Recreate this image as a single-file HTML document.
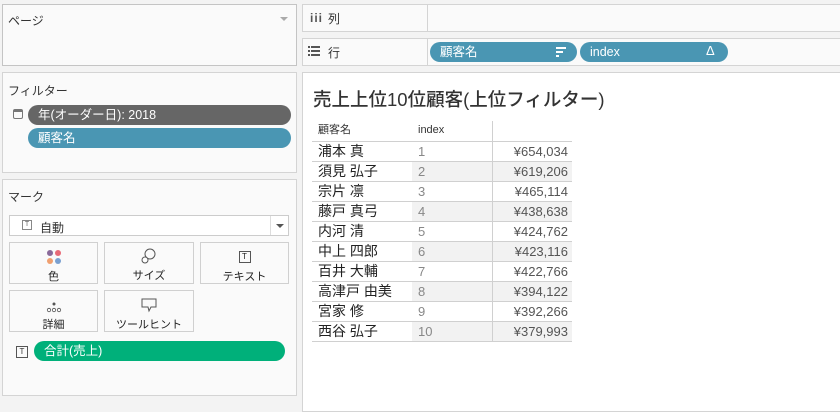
<!DOCTYPE html>
<html><head><meta charset="utf-8"><style>
*{box-sizing:border-box;margin:0;padding:0}
body{width:840px;height:404px;background:#f3f3f3;font-family:"Liberation Sans","Noto Sans CJK JP",sans-serif;font-size:12px;color:#333;position:relative;overflow:hidden}
.a{position:absolute}
.box{position:absolute;background:#fafafa;border:1px solid #d4d4d4}
.pill{position:absolute;height:20px;border-radius:10px;color:#fff;font-size:12.5px;line-height:20px;padding-left:10px}
.btn{position:absolute;border:1px solid #d0d0d0;background:#fafafa;text-align:center;font-size:11px;color:#222}
.tbl{position:absolute;left:312px;top:121px;border-collapse:collapse;font-size:13px}
.tbl td{height:20px;border-bottom:1px solid #d0d0d0;padding:0;line-height:19px}
.tbl td.n{width:100px;padding-left:6px;font-size:14px;color:#222}
.tbl td.i{width:80px;padding-left:6px;color:#888}
.tbl td.v{width:80px;text-align:right;padding-right:4px;border-left:1px solid #d0d0d0;color:#555}
.tbl tr:nth-child(odd):not(.h) td.i,.tbl tr:nth-child(odd):not(.h) td.v{background:#f2f2f2}
.tbl tr.h td{font-size:11px;color:#333;border-bottom:1px solid #d0d0d0}
</style></head><body>
<div class="box" style="left:2px;top:4px;width:295px;height:62px;border-color:#c4c4c4"></div>
<div class="a" style="left:8px;top:12px;font-size:12px">ページ</div>
<div class="a" style="left:280px;top:17px;width:0;height:0;border-left:4px solid transparent;border-right:4px solid transparent;border-top:4px solid #aaa"></div>

<div class="box" style="left:2px;top:72px;width:295px;height:101px"></div>
<div class="a" style="left:8px;top:82px">フィルター</div>
<div class="a" style="left:13px;top:109px;width:10px;height:10px;border:1px solid #777;border-radius:2px;border-top-width:3px"></div>
<div class="pill" style="left:28px;top:105px;width:263px;background:#666">年(オーダー日): 2018</div>
<div class="pill" style="left:28px;top:128px;width:263px;background:#4a96b3">顧客名</div>

<div class="box" style="left:2px;top:179px;width:295px;height:217px"></div>
<div class="a" style="left:8px;top:188px">マーク</div>
<div class="a" style="left:9px;top:215px;width:280px;height:21px;border:1px solid #ccc;background:#fff"></div>
<div class="a" style="left:22px;top:220px;width:10px;height:10px;border:1px solid #888;font-size:7px;line-height:8px;text-align:center;color:#666">T</div>
<div class="a" style="left:40px;top:219px;font-size:12px">自動</div>
<div class="a" style="left:270px;top:216px;width:1px;height:19px;background:#ddd"></div>
<div class="a" style="left:276px;top:224px;border-left:4px solid transparent;border-right:4px solid transparent;border-top:4px solid #555"></div>

<div class="btn" style="left:9px;top:242px;width:89px;height:42px"><div style="position:relative;height:25px"><span class="a" style="left:37px;top:7px;width:6px;height:6px;border-radius:3px;background:#8a6a9a"></span><span class="a" style="left:45px;top:7px;width:6px;height:6px;border-radius:3px;background:#e86a77"></span><span class="a" style="left:37px;top:15px;width:6px;height:6px;border-radius:3px;background:#f0a070"></span><span class="a" style="left:45px;top:15px;width:6px;height:6px;border-radius:3px;background:#7aa0d0"></span></div>色</div>
<div class="btn" style="left:104px;top:242px;width:90px;height:42px"><svg width="20" height="22" style="display:block;margin:2px auto 0" viewBox="0 0 20 22"><circle cx="11" cy="9" r="5" fill="none" stroke="#555"/><circle cx="6" cy="15" r="3" fill="#fff" stroke="#555"/></svg>サイズ</div>
<div class="btn" style="left:200px;top:242px;width:89px;height:42px"><div style="width:12px;height:12px;border:1px solid #555;margin:8px auto 5px;font-size:8px;line-height:10px">T</div>テキスト</div>
<div class="btn" style="left:9px;top:290px;width:89px;height:42px"><svg width="20" height="22" style="display:block;margin:3px auto 0" viewBox="0 0 20 22"><circle cx="10" cy="10" r="1.5" fill="#555"/><circle cx="5" cy="16" r="1.7" fill="none" stroke="#555" stroke-width=".8"/><circle cx="10" cy="16" r="1.7" fill="none" stroke="#555" stroke-width=".8"/><circle cx="15" cy="16" r="1.7" fill="none" stroke="#555" stroke-width=".8"/></svg>詳細</div>
<div class="btn" style="left:104px;top:290px;width:90px;height:42px"><svg width="20" height="22" style="display:block;margin:3px auto 0" viewBox="0 0 20 22"><path d="M3 5h14v8h-5l-2 4-1-4H3z" fill="none" stroke="#555"/></svg>ツールヒント</div>
<div class="a" style="left:16px;top:346px;width:12px;height:12px;border:1px solid #555;font-size:8px;line-height:10px;text-align:center">T</div>
<div class="pill" style="left:34px;top:341px;width:251px;background:#00b07a">合計(売上)</div>

<div class="box" style="left:302px;top:4px;width:540px;height:28px;background:#fafafa"></div>
<div class="a" style="left:427px;top:4px;width:1px;height:28px;background:#d4d4d4"></div>
<div class="a" style="left:310px;top:11px;font-weight:bold;font-size:12px;letter-spacing:1px;color:#555">iii</div>
<div class="a" style="left:328px;top:10px">列</div>
<div class="box" style="left:302px;top:38px;width:540px;height:28px;background:#fafafa"></div>
<div class="a" style="left:427px;top:38px;width:1px;height:28px;background:#d4d4d4"></div>
<svg class="a" style="left:308px;top:45px" width="12" height="12" viewBox="0 0 12 12"><g fill="#555"><rect x="0" y="1" width="2" height="2"/><rect x="3" y="1" width="9" height="2"/><rect x="0" y="5" width="2" height="2"/><rect x="3" y="5" width="9" height="2"/><rect x="0" y="9" width="2" height="2"/><rect x="3" y="9" width="9" height="2"/></g></svg>
<div class="a" style="left:328px;top:44px">行</div>
<div class="pill" style="left:430px;top:42px;width:147px;background:#4a96b3">顧客名</div>
<svg class="a" style="left:555px;top:46px" width="12" height="12" viewBox="0 0 12 12"><g fill="#fff"><rect x="1" y="1" width="10" height="2"/><rect x="1" y="5" width="7" height="2"/><rect x="1" y="9" width="3" height="2"/></g></svg>
<div class="pill" style="left:580px;top:42px;width:148px;background:#4a96b3">index</div>
<div class="a" style="left:706px;top:43px;color:#fff;font-size:13px">Δ</div>

<div class="a" style="left:302px;top:72px;width:540px;height:340px;background:#fff;border:1px solid #d4d4d4"></div>
<div class="a" style="left:313px;top:86px;font-size:18.5px;color:#333;white-space:nowrap;font-weight:500">売上上位10位顧客(上位フィルター)</div>
<table class="tbl">
<tr class="h"><td class="n" style="font-size:11px">顧客名</td><td class="i" style="color:#333">index</td><td class="v"></td></tr>
<tr><td class="n">浦本 真</td><td class="i">1</td><td class="v">¥654,034</td></tr>
<tr><td class="n">須見 弘子</td><td class="i">2</td><td class="v">¥619,206</td></tr>
<tr><td class="n">宗片 凛</td><td class="i">3</td><td class="v">¥465,114</td></tr>
<tr><td class="n">藤戸 真弓</td><td class="i">4</td><td class="v">¥438,638</td></tr>
<tr><td class="n">内河 清</td><td class="i">5</td><td class="v">¥424,762</td></tr>
<tr><td class="n">中上 四郎</td><td class="i">6</td><td class="v">¥423,116</td></tr>
<tr><td class="n">百井 大輔</td><td class="i">7</td><td class="v">¥422,766</td></tr>
<tr><td class="n">高津戸 由美</td><td class="i">8</td><td class="v">¥394,122</td></tr>
<tr><td class="n">宮家 修</td><td class="i">9</td><td class="v">¥392,266</td></tr>
<tr><td class="n">西谷 弘子</td><td class="i">10</td><td class="v">¥379,993</td></tr>
</table>
</body></html>
